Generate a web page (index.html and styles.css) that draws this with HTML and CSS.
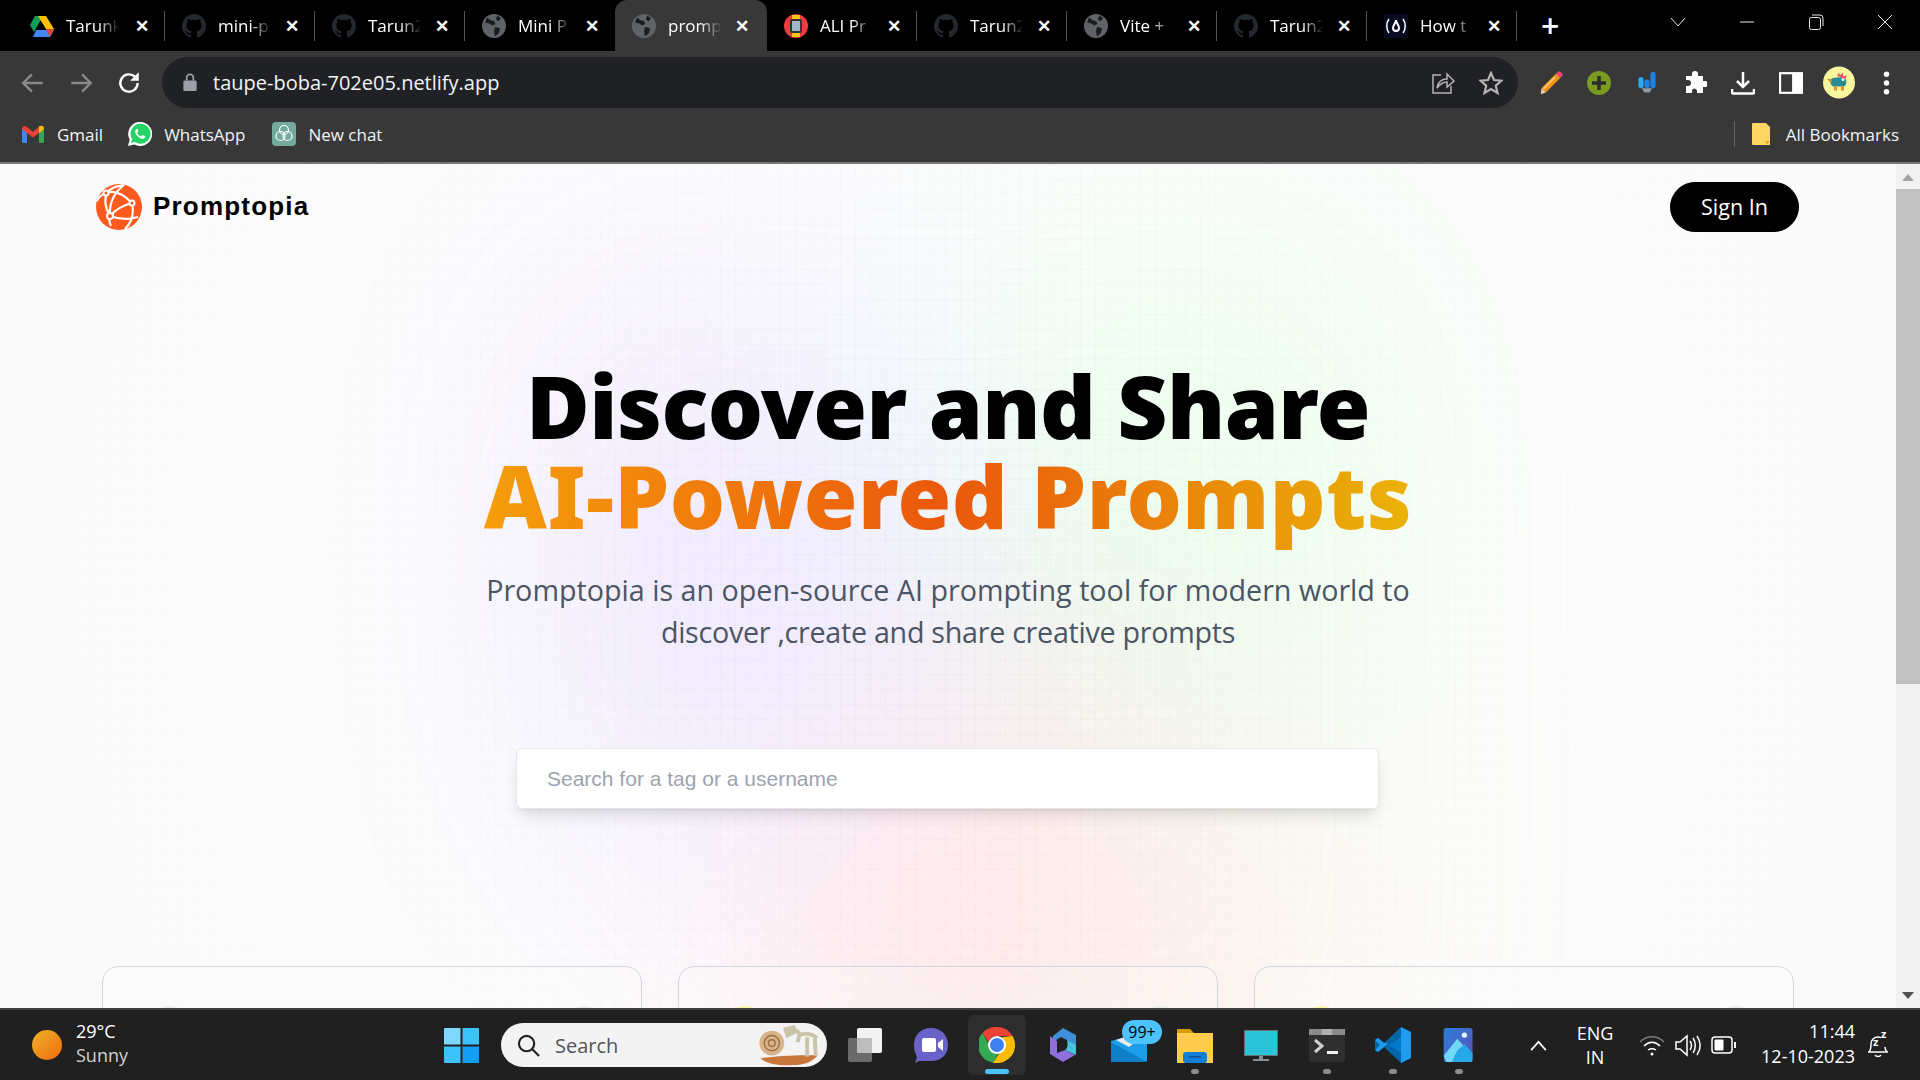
FILE: index.html
```html
<!DOCTYPE html>
<html lang="en">

<head>
    <meta charset="UTF-8">
    <meta name="viewport" content="width=device-width, initial-scale=1.0">
    <title>Promptopia</title>
    <link rel="stylesheet" href="styles.css">
</head>

<body>
    <svg class="sprites" aria-hidden="true">
        <symbol id="github" viewBox="0 0 16 16">
            <path fill="#24292f" d="M8 0C3.58 0 0 3.58 0 8c0 3.54 2.29 6.53 5.47 7.59.4.07.55-.17.55-.38 0-.19-.01-.82-.01-1.49-2.01.37-2.53-.49-2.69-.94-.09-.23-.48-.94-.82-1.13-.28-.15-.68-.52-.01-.53.63-.01 1.08.58 1.23.82.72 1.21 1.87.87 2.33.66.07-.52.28-.87.51-1.07-1.78-.2-3.64-.89-3.64-3.95 0-.87.31-1.59.82-2.15-.08-.2-.36-1.02.08-2.12 0 0 .67-.21 2.2.82.64-.18 1.32-.27 2-.27.68 0 1.36.09 2 .27 1.53-1.04 2.2-.82 2.2-.82.44 1.1.16 1.92.08 2.12.51.56.82 1.27.82 2.15 0 3.07-1.87 3.75-3.65 3.95.29.25.54.73.54 1.48 0 1.07-.01 1.93-.01 2.2 0 .21.15.46.55.38A8.013 8.013 0 0016 8c0-4.42-3.58-8-8-8z" />
        </symbol>
        <symbol id="globe" viewBox="0 0 24 24">
            <circle cx="12" cy="12" r="12" fill="#5f6368" />
            <path fill="#1b1b1c" d="M5 3.500l4 3 3 .5 1.500 3-3.500 1.500-2.500-2L3 8.500zM15 1.500l4 2.500-2 3-3-1zM13 13l5 1-1 5-4 3.500-1-5z" />
        </symbol>
    </svg>

    <div class="tabstrip">
        <div class="tab">
            <svg class="tab-icon" viewBox="0 0 24 22">
                <path fill="#0f9d58" d="M8 1h8L7 17l-4-7z" transform="translate(-3 -0)" />
                <path fill="#ffc107" d="M8 1h8l8 13h-8z" />
                <path fill="#4285f4" d="M6 15h18l-4 7H3z" />
                <path fill="#ea4335" d="M16 14h8l-4 8z" />
            </svg>
            <span class="tab-title">Tarunk</span><span class="tab-close">&#10005;</span>
        </div>
        <div class="tab"><svg class="tab-icon"><use href="#github" /></svg><span class="tab-title">mini-p</span><span class="tab-close">&#10005;</span></div>
        <div class="tab"><svg class="tab-icon"><use href="#github" /></svg><span class="tab-title">Tarun2</span><span class="tab-close">&#10005;</span></div>
        <div class="tab tab-before-active"><svg class="tab-icon"><use href="#globe" /></svg><span class="tab-title">Mini P</span><span class="tab-close">&#10005;</span></div>
        <div class="tab tab-active"><svg class="tab-icon"><use href="#globe" /></svg><span class="tab-title">promp</span><span class="tab-close">&#10005;</span></div>
        <div class="tab">
            <svg class="tab-icon" viewBox="0 0 24 24">
                <circle cx="12" cy="12" r="12" fill="#ef3b3f" />
                <rect x="8" y="1" width="8" height="22" fill="#f5c518" />
                <rect x="6" y="5" width="12" height="14" rx="2" fill="#333" />
                <rect x="8" y="7" width="8" height="10" fill="#9fb8c8" />
            </svg>
            <span class="tab-title">ALI Pr</span><span class="tab-close">&#10005;</span>
        </div>
        <div class="tab"><svg class="tab-icon"><use href="#github" /></svg><span class="tab-title">Tarun2</span><span class="tab-close">&#10005;</span></div>
        <div class="tab"><svg class="tab-icon"><use href="#globe" /></svg><span class="tab-title">Vite +</span><span class="tab-close">&#10005;</span></div>
        <div class="tab"><svg class="tab-icon"><use href="#github" /></svg><span class="tab-title">Tarun2</span><span class="tab-close">&#10005;</span></div>
        <div class="tab">
            <svg class="tab-icon" viewBox="0 0 24 24">
                <rect width="24" height="24" fill="#0a0a23" />
                <path fill="none" stroke="#fff" stroke-width="1.500" d="M5 5c-3 4-3 10 0 14M19 5c3 4 3 10 0 14" />
                <path fill="none" stroke="#fff" stroke-width="2" d="M12 6c0 3 3 5 3 8 0 2-1 3-3 3s-3-1-3-3c0-3 3-5 3-8z" />
            </svg>
            <span class="tab-title">How t</span><span class="tab-close">&#10005;</span>
        </div>
        <div class="new-tab">+</div>
        <div class="window-controls">
            <svg class="win-btn" viewBox="0 0 16 16"><path d="M1 4l7 8 7-8" /></svg>
            <svg class="win-btn" viewBox="0 0 16 16"><path d="M1 8h14" /></svg>
            <svg class="win-btn" viewBox="0 0 16 16"><rect x="1.500" y="3.500" width="11" height="12" rx="2" /><path d="M4 1h8a3 3 0 0 1 3 3v8" /></svg>
            <svg class="win-btn" viewBox="0 0 16 16"><path d="M1 1l14 14M15 1L1 15" /></svg>
        </div>
    </div>

    <div class="toolbar">
        <svg class="nav-btn nav-dim" viewBox="0 0 24 24"><path d="M21 12H4M11 4l-8 8 8 8" /></svg>
        <svg class="nav-btn nav-dim" viewBox="0 0 24 24"><path d="M3 12h17M13 4l8 8-8 8" /></svg>
        <svg class="nav-btn" viewBox="0 0 24 24"><path d="M20 12a8 8 0 1 1-2.500-5.800" /><path class="solid" d="M21 2v8h-8z" /></svg>
        <div class="address-bar">
            <svg class="lock" viewBox="0 0 14 20"><path d="M3.500 8V5a3.500 3.500 0 0 1 7 0v3" fill="none" stroke="#9aa0a6" stroke-width="1.800" /><rect y="8" width="14" height="11" rx="1.500" fill="#9aa0a6" /></svg>
            <span class="url">taupe-boba-702e05.netlify.app</span>
            <svg class="addr-icon addr-share" viewBox="0 0 24 24"><path d="M10 4H2v18h18v-7" /><path d="M6 17c1-6 5-9 10-9V3l7 7-7 6v-5c-4 0-7 2-10 6z" /></svg>
            <svg class="addr-icon" viewBox="0 0 24 24"><path d="M12 2l3 7 7.500.7-5.700 5 1.700 7.300-6.500-3.900L5.500 22l1.700-7.300-5.700-5L9 9z" stroke-width="2.200" /></svg>
        </div>
        <div class="extensions">
            <svg class="ext" viewBox="0 0 28 28">
                <path fill="#f29111" d="M20 3l5 5L8 25l-5-5z" />
                <path fill="#ffc266" d="M18 6l2 2L6 22l-2-2z" />
                <path fill="#f0447a" d="M20 3l2-2a2 2 0 0 1 3 0l2 2a2 2 0 0 1 0 3l-2 2z" />
                <path fill="#e8d0b0" d="M3 20l5 5-6 2z" />
            </svg>
            <svg class="ext" viewBox="0 0 24 24">
                <circle cx="12" cy="12" r="12" fill="#7a9a22" />
                <path fill="none" stroke="#2d2d2d" stroke-width="3.500" d="M12 5v14M5 12h14" />
            </svg>
            <svg class="ext" viewBox="0 0 24 28">
                <rect x="2" y="7" width="6" height="13" rx="3" fill="#2aa8f0" />
                <rect x="9" y="10" width="6" height="10" rx="3" fill="#1d7fe0" />
                <rect x="16" y="1" width="6" height="19" rx="3" fill="#1d7fe0" />
                <path fill="#8e9ba6" d="M6 20h12l-3 5H9z" />
            </svg>
            <svg class="ext" viewBox="0 0 24 24"><path fill="#fff" d="M9 3a3 3 0 0 1 6 0v2h5v5h2a3 3 0 0 1 0 6h-2v6h-6v-2a2.500 2.500 0 0 0-5 0v2H3v-7h2a3 3 0 0 0 0-6H3V5h6z" /></svg>
            <svg class="ext" viewBox="0 0 24 24"><path fill="none" stroke="#fff" stroke-width="2.500" d="M12 1v14M6 10l6 6 6-6M1 18v3a1.500 1.500 0 0 0 1.500 1.500h19A1.500 1.500 0 0 0 23 21v-3" /></svg>
            <svg class="ext" viewBox="0 0 22 20"><rect width="22" height="20" fill="#fff" /><rect x="2" y="2" width="10" height="16" fill="#383838" /></svg>
            <svg class="ext ext-avatar" viewBox="0 0 32 32">
                <circle cx="16" cy="16" r="16" fill="#f7f59e" />
                <path fill="#2a8c93" d="M7 13c5-3 13-3 16 0 1 3 0 6-2 7H10c-2-1-3-4-3-7z" />
                <path fill="#f08a24" d="M4 12l5 1-1 4z" />
                <path fill="#e84c6c" d="M14 9l2-3 1 3 3-3 0 4 4-1-2 4z" />
                <circle cx="20" cy="13" r="1.500" fill="#fff" />
                <rect x="11" y="20" width="3" height="4" fill="#f08a24" />
                <rect x="18" y="20" width="3" height="4" fill="#f08a24" />
            </svg>
            <svg class="ext ext-dots" viewBox="0 0 6 22"><circle cx="3" cy="3" r="2.500" /><circle cx="3" cy="11" r="2.500" /><circle cx="3" cy="19" r="2.500" /></svg>
        </div>
    </div>

    <div class="bookmarks">
        <div class="bookmark">
            <svg class="bm-icon" viewBox="0 0 22 18">
                <path fill="#4285f4" d="M0 3h5v15H1.500A1.500 1.500 0 0 1 0 16.500z" />
                <path fill="#34a853" d="M17 3h5v13.500a1.500 1.500 0 0 1-1.500 1.500H17z" />
                <path fill="#ea4335" d="M0 3a3 3 0 0 1 5-1l6 5 6-5a3 3 0 0 1 5 1v1l-5 4-6 4.500L5 8 0 4z" />
                <path fill="#fbbc04" d="M17 1.500a3 3 0 0 1 5 1.500v1l-5 4z" />
            </svg>
            <span>Gmail</span>
        </div>
        <div class="bookmark">
            <svg class="bm-icon bm-square" viewBox="0 0 24 24">
                <path fill="#fff" d="M0 24l1.700-6.200A12 12 0 1 1 6.300 22.400z" />
                <path fill="#25d366" d="M3 21l1.100-4A10 10 0 1 1 7 20z" />
                <path fill="#fff" d="M9 7c-.5 0-1 .2-1.300.8-.8 1.500-.7 3 .6 5 1.400 2 3.400 3.500 5.500 4 1.500.3 2.800-.4 3.200-1.600.2-.6.2-1 0-1.200l-2.200-1c-.3-.1-.5 0-.7.2l-.8 1c-.2.200-.4.200-.7.100-1.600-.7-2.600-1.700-3.400-3-.1-.3-.1-.5.100-.7l.6-.7c.2-.2.200-.5.100-.7L10 7.400C9.800 7 9.400 7 9 7z" />
            </svg>
            <span>WhatsApp</span>
        </div>
        <div class="bookmark">
            <svg class="bm-icon bm-square" viewBox="0 0 24 24">
                <rect width="24" height="24" rx="4" fill="#74aa9c" />
                <g fill="none" stroke="#fff" stroke-width="1.200">
                    <circle cx="12" cy="8" r="4.500" />
                    <circle cx="8.500" cy="14" r="4.500" />
                    <circle cx="15.500" cy="14" r="4.500" />
                </g>
            </svg>
            <span>New chat</span>
        </div>
        <div class="all-bookmarks">
            <svg class="folder" viewBox="0 0 18 22"><path fill="#fdd663" d="M1 0h13l4 4v18H1a1 1 0 0 1-1-1V1a1 1 0 0 1 1-1z" /><path fill="#e8a900" d="M14 22v-4h4z" /></svg>
            <span>All Bookmarks</span>
        </div>
    </div>

    <div class="viewport">
        <div class="page">
            <div class="page-bg">
                <div class="grid-lines"></div>
                <div class="fade"></div>
                <div class="gradient"></div>
            </div>

            <nav class="site-nav">
                <div class="brand">
                    <svg class="brand-logo" viewBox="0 0 46 46">
                        <circle cx="23" cy="23" r="23" fill="#fe5a1e" />
                        <g fill="none" stroke="#fff" stroke-width="2.200">
                            <path d="M11 9c7-3 15 0 25 10M11 9c-3 7-1 16 3 23M14 32c6-7 14-11 22-13M14 32c8 3 18 4 28 1M36 19c2 9 1 18-7 26M11 9c3-5 10-7 17-8M28 1c-9 7-15 18-14 31M14 32c-1 3-1 6 1 10M11 9C7 10 3 12 1 17" />
                        </g>
                        <g fill="#fe5a1e" stroke="#fff" stroke-width="2">
                            <circle cx="10" cy="9" r="2.500" />
                            <circle cx="36" cy="19" r="2.500" />
                            <circle cx="14" cy="32" r="3" />
                        </g>
                    </svg>
                    <span class="brand-name">Promptopia</span>
                </div>
                <button class="sign-in" type="button">Sign In</button>
            </nav>

            <section class="hero">
                <h1 class="hero-title">Discover and Share<br><span class="orange-text">AI-Powered Prompts</span></h1>
                <p class="hero-desc">Promptopia is an open-source AI prompting tool for modern world to<br><span class="hero-desc-end">discover ,create and share creative prompts</span></p>
                <input class="search-input" type="text" placeholder="Search for a tag or a username">
            </section>

            <div class="cards">
                <div class="card"><span class="avatar avatar-grey"></span><span class="avatar avatar-grey"></span></div>
                <div class="card"><span class="avatar avatar-yellow"></span><span class="avatar avatar-grey"></span></div>
                <div class="card"><span class="avatar avatar-yellow"></span><span class="avatar avatar-grey"></span></div>
            </div>
        </div>
        <div class="scrollbar">
            <div class="scroll-arrow scroll-up"></div>
            <div class="scroll-thumb"></div>
            <div class="scroll-arrow scroll-down"></div>
        </div>
    </div>

    <div class="taskbar">
        <div class="weather">
            <span class="sun"></span>
            <div class="weather-text"><span>29°C</span><span class="weather-dim">Sunny</span></div>
        </div>
        <svg class="start" viewBox="0 0 35 35">
            <path fill="#7fd8ff" d="M1 0h15.500v16.500H0V1a1 1 0 0 1 1-1z" />
            <path fill="#3cc1fb" d="M18.500 0H34a1 1 0 0 1 1 1v15.500H18.500z" />
            <path fill="#3cc1fb" d="M0 18.500h16.500V35H1a1 1 0 0 1-1-1z" />
            <path fill="#149df5" d="M18.500 18.500H35V34a1 1 0 0 1-1 1H18.500z" />
        </svg>
        <div class="task-search">
            <svg class="task-search-icon" viewBox="0 0 24 24"><circle cx="10" cy="10" r="8" /><path d="M16 16l7 7" /></svg>
            <span>Search</span>
            <svg class="doodle" viewBox="0 0 66 44">
                <path fill="#c8763a" d="M3 36c14-3 48-4 60-3-6 7-14 10-26 10-12 1-28-1-34-7z" />
                <circle cx="15" cy="20" r="13" fill="#d9b389" />
                <circle cx="15" cy="20" r="8" fill="none" stroke="#9b6f45" stroke-width="1.500" />
                <circle cx="15" cy="20" r="3.500" fill="none" stroke="#9b6f45" stroke-width="1.500" />
                <path fill="none" stroke="#c9c3a8" stroke-width="4" d="M28 8c8-5 14-2 16 3 6-1 14-1 18 4M44 11l-2 8M52 14v20M60 15l1 18" />
                <path fill="#c9c3a8" d="M27 4l12-3 3 8-12 6z" />
            </svg>
        </div>
        <div class="task-apps">
            <div class="app">
                <svg viewBox="0 0 36 36">
                    <rect x="1" y="11" width="24" height="24" rx="2" fill="#6a6a6a" />
                    <rect x="10" y="1" width="25" height="25" rx="2" fill="#f2f2f2" />
                    <rect x="10" y="11" width="15" height="15" fill="#bdbdbd" />
                </svg>
            </div>
            <div class="app">
                <svg viewBox="0 0 36 36">
                    <path fill="#6b62c9" d="M18 1c10 0 17 7 17 17s-7 16-17 16H6l-4 2 2-6C2 26 1 22 1 18 1 8 8 1 18 1z" />
                    <rect x="9" y="11" width="14" height="14" rx="2" fill="#fff" />
                    <path fill="#fff" d="M25 16l5-4v12l-5-4z" />
                </svg>
            </div>
            <div class="app app-active">
                <svg viewBox="0 0 36 36">
                    <path fill="#ea4335" d="M18 0a18 18 0 0 1 15.600 9H18a9 9 0 0 0-8.500 6L3.500 6A18 18 0 0 1 18 0z" />
                    <path fill="#34a853" d="M3.500 6l9 16a9 9 0 0 0 6.500 5l-5 8.700A18 18 0 0 1 3.500 6z" />
                    <path fill="#fbbc04" d="M33.600 9A18 18 0 0 1 14 35.700l9-13.700A9 9 0 0 0 23 10z" />
                    <circle cx="18" cy="18" r="9" fill="#fff" />
                    <circle cx="18" cy="18" r="7" fill="#3b7ff0" />
                </svg>
            </div>
            <div class="app">
                <svg viewBox="0 0 36 36">
                    <path fill="#3f8fd8" d="M18 1l13 7v11l-9-6-6-3-8 5V9z" />
                    <path fill="#8f6fdc" d="M5 9v18l13 8 12-7-10-5-8 3V14z" />
                    <path fill="#47c4d8" d="M22 13l9 5v10l-11-5c3-2 3-6 2-10z" />
                    <circle cx="18" cy="18" r="4" fill="#202020" />
                </svg>
            </div>
            <div class="app app-mail">
                <svg viewBox="0 0 36 36">
                    <path fill="#1d9ee8" d="M0 14l36-10v30H0z" />
                    <path fill="#eaeaea" d="M5 13l20-7 4 5-11 9z" />
                    <path fill="#0d7fc9" d="M0 15l36 20H0z" />
                </svg>
                <span class="mail-badge">99+</span>
            </div>
            <div class="app app-open">
                <svg viewBox="0 0 36 36">
                    <path fill="#d69c00" d="M0 2h13l4 4h5v6H0z" />
                    <path fill="#ffcc4d" d="M0 6h36v30H0z" />
                    <rect x="6" y="25" width="24" height="11" rx="3" fill="#0f7fd8" />
                    <rect x="12" y="29" width="12" height="1.500" fill="#0a4f90" />
                </svg>
            </div>
            <div class="app">
                <svg viewBox="0 0 36 36">
                    <rect x="1" y="3" width="34" height="26" fill="#6a6f73" />
                    <rect x="2" y="4" width="32" height="24" fill="#2bc4d8" />
                    <rect x="16" y="29" width="4" height="3" fill="#8a8f93" />
                    <rect x="10" y="32" width="16" height="2" fill="#8a8f93" />
                </svg>
            </div>
            <div class="app app-open">
                <svg viewBox="0 0 36 36">
                    <rect y="2" width="36" height="33" rx="2" fill="#2f2f2f" />
                    <rect y="2" width="36" height="6" fill="#8c8c8c" />
                    <rect x="13" y="2" width="10" height="6" fill="#b0b0b0" />
                    <path fill="none" stroke="#cfcfcf" stroke-width="3" d="M6 13l7 6-7 6" />
                    <rect x="18" y="24" width="11" height="3" fill="#f2f2f2" />
                </svg>
            </div>
            <div class="app app-open">
                <svg viewBox="0 0 36 36">
                    <path fill="#0065a9" d="M26 0l10 5v26l-10 5-17-16-6 5-3-2V13l3-2 6 5z" />
                    <path fill="#1f9cf0" d="M26 0l10 5v26l-10 5zM9 16l-6-5-3 2 5 5-5 5 3 2 6-5 4-4z" />
                    <path fill="#007acc" d="M26 10L14 18l12 8z" />
                </svg>
            </div>
            <div class="app app-open">
                <svg viewBox="0 0 36 40">
                    <defs>
                        <linearGradient id="photosBg" x1="0" y1="0" x2="1" y2="1">
                            <stop offset="0" stop-color="#2b7fd8" />
                            <stop offset="1" stop-color="#5d4fb8" />
                        </linearGradient>
                    </defs>
                    <rect x="1" y="1" width="32" height="38" rx="3" fill="url(#photosBg)" />
                    <circle cx="24" cy="9" r="3" fill="#dff3ff" />
                    <path fill="#6fd8f7" d="M1 32l15-19 12 13-12 13H4z" />
                    <path fill="#28a8e8" d="M16 26l8-7 9 10v7a3 3 0 0 1-3 3H10z" />
                </svg>
            </div>
        </div>
        <div class="tray">
            <svg class="tray-chevron" viewBox="0 0 18 12"><path d="M1 11l8-9 8 9" /></svg>
            <div class="lang"><span>ENG</span><span>IN</span></div>
            <svg class="tray-icon" viewBox="0 0 26 24"><path stroke="#777" d="M1 9c7-7 17-7 24 0" /><path d="M5 13c5-5 11-5 16 0M9 17c3-2 5-2 8 0" /><circle cx="13" cy="21" r="1.500" class="solid" /></svg>
            <svg class="tray-icon" viewBox="0 0 26 24"><path d="M1 9v7h4l7 6V3L5 9zM15 8c2 3 2 6 0 9M18 5c3 4 3 11 0 15M22 3c4 6 4 13 0 19" /></svg>
            <svg class="tray-icon" viewBox="0 0 26 24"><rect x="1" y="4" width="20" height="16" rx="3" /><rect class="solid" x="3.500" y="6.500" width="9" height="11" rx="1" /><path class="solid" d="M23 9h2v6h-2z" /></svg>
            <div class="clock"><span>11:44</span><span>12-10-2023</span></div>
            <div class="bell">
                <svg viewBox="0 0 24 30"><path d="M3 22c2-2 2-5 2-8 0-4 3-7 7-7M12 7c1 0 2 .2 3 .7M21 22c-1-1-2-3-2-5M2 22h20M9 25c1 2 5 2 6 0" /></svg>
                <span class="bell-z">z</span><span class="bell-z bell-z2">z</span>
            </div>
        </div>
    </div>
</body>

</html>
```

FILE: styles.css
```css
* {
    box-sizing: border-box;
}

html,
body {
    margin: 0;
    height: 100%;
    overflow: hidden;
}

body {
    display: flex;
    flex-direction: column;
    width: 1920px;
    height: 1080px;
    font-family: "Open Sans", "Noto Sans", sans-serif;
    background: #fff;
}

.sprites {
    display: none;
}

/* tab strip */
.tabstrip {
    display: flex;
    align-items: center;
    height: 51px;
    padding-left: 15px;
    background: #000;
    color: #fff;
    flex-shrink: 0;
}

.tab {
    position: relative;
    display: flex;
    align-items: center;
    width: 150px;
    height: 30px;
    padding-left: 17px;
    border-right: 1px solid #555;
    font-size: 17px;
}

.tab:first-child {
    padding-left: 15px;
}

.tab-before-active {
    border-right: none;
}

.tab-active {
    height: 51px;
    width: 152px;
    background: #383838;
    border-right: none;
    border-radius: 12px 12px 0 0;
    align-self: flex-end;
}

.tab-icon {
    width: 24px;
    height: 24px;
    flex-shrink: 0;
}

.tab-title {
    margin-left: 12px;
    width: 58px;
    white-space: nowrap;
    overflow: hidden;
    mask-image: linear-gradient(to right, #000 55%, transparent 92%);
}

.tab-close {
    position: absolute;
    left: 120px;
    font-size: 17px;
    font-weight: 700;
}

.new-tab {
    margin-left: 24px;
    font-size: 32px;
    font-weight: 600;
    line-height: 1;
}

.window-controls {
    display: flex;
    gap: 53px;
    margin-left: auto;
    margin-right: 27px;
    margin-top: -8px;
}

.win-btn {
    width: 16px;
    height: 16px;
    fill: none;
    stroke: #e8e8e8;
    stroke-width: 1;
}

/* address bar row */
.toolbar {
    display: flex;
    align-items: center;
    height: 63px;
    padding: 6px 0 6px 20px;
    background: #383838;
    flex-shrink: 0;
}

.nav-btn {
    width: 26px;
    height: 26px;
    margin-right: 22px;
    fill: none;
    stroke: #fff;
    stroke-width: 2.200;
}

.nav-btn .solid {
    fill: #fff;
    stroke: none;
}

.nav-dim {
    stroke: #8a8a8a;
}

.address-bar {
    display: flex;
    align-items: center;
    width: 1356px;
    height: 51px;
    margin-left: -2px;
    padding: 0 15px 0 21px;
    background: #202124;
    border-radius: 26px;
}

.lock {
    width: 14px;
    height: 19px;
}

.url {
    margin-left: 16px;
    color: #f1f3f4;
    font-size: 20px;
}

.addr-icon {
    width: 24px;
    height: 24px;
    margin-left: 24px;
    fill: none;
    stroke: #b4b4b4;
    stroke-width: 1.500;
}

.addr-share {
    margin-left: auto;
}

.extensions {
    display: flex;
    align-items: center;
    margin-left: 9px;
}

.ext {
    width: 24px;
    height: 24px;
    margin: 0 12px;
}

.ext-avatar {
    width: 32px;
    height: 33px;
    margin: 0 8px;
}

.ext-dots {
    width: 7px;
    margin: 0 20px;
    fill: #fff;
}

/* bookmarks row */
.bookmarks {
    display: flex;
    align-items: center;
    height: 50px;
    padding: 0 22px 8px;
    background: #383838;
    border-bottom: 2px solid #777;
    color: #f1f3f4;
    font-size: 17px;
    flex-shrink: 0;
}

.bookmark {
    display: flex;
    align-items: center;
    gap: 12px;
    margin-right: 27px;
}

.bookmark:first-child {
    gap: 13px;
    margin-right: 25px;
}

.bm-icon {
    width: 22px;
    height: 18px;
}

.bm-square {
    width: 24px;
    height: 24px;
}

.all-bookmarks {
    display: flex;
    align-items: center;
    gap: 16px;
    height: 26px;
    margin-left: auto;
    padding-left: 17px;
    border-left: 1px solid #666;
    margin-right: -1px;
}

.folder {
    width: 18px;
    height: 22px;
}

/* page */
.viewport {
    display: flex;
    flex: 1;
    min-height: 0;
}

.page {
    position: relative;
    flex: 1;
    overflow: hidden;
    background: #fff;
}

.page-bg {
    position: absolute;
    inset: 0;
    display: flex;
    justify-content: center;
    height: 844px;
}

.grid-lines {
    position: absolute;
    inset: 0;
    background-image: linear-gradient(to right, rgba(0, 0, 0, .025) 1px, transparent 1px), linear-gradient(to bottom, rgba(0, 0, 0, .025) 1px, transparent 1px);
    background-size: 15px 15px;
}

.fade {
    position: absolute;
    inset: 0;
    background: radial-gradient(circle, rgba(2, 0, 36, 0) 0, #fafafa 100%);
}

.gradient {
    position: absolute;
    top: 100px;
    width: 100%;
    max-width: 800px;
    height: 100%;
    opacity: .15;
    filter: blur(125px) saturate(150%);
    background-image:
        radial-gradient(at 27% 37%, hsla(215, 98%, 61%, 1) 0px, transparent 0%),
        radial-gradient(at 97% 21%, hsla(125, 98%, 72%, 1) 0px, transparent 50%),
        radial-gradient(at 52% 99%, hsla(354, 98%, 61%, 1) 0px, transparent 50%),
        radial-gradient(at 10% 29%, hsla(256, 96%, 67%, 1) 0px, transparent 50%),
        radial-gradient(at 97% 96%, hsla(38, 60%, 74%, 1) 0px, transparent 50%),
        radial-gradient(at 33% 50%, hsla(222, 67%, 73%, 1) 0px, transparent 50%),
        radial-gradient(at 79% 53%, hsla(343, 68%, 79%, 1) 0px, transparent 50%);
}

.site-nav {
    position: relative;
    display: flex;
    align-items: center;
    justify-content: space-between;
    padding: 18px 97px 0 96px;
}

.brand {
    display: flex;
    align-items: center;
    gap: 11px;
}

.brand-logo {
    width: 46px;
    height: 46px;
}

.brand-name {
    padding-bottom: 2px;
    font-family: "Liberation Sans", Arial, sans-serif;
    font-size: 26px;
    font-weight: 700;
    letter-spacing: 1.2px;
    color: #000;
}

.sign-in {
    width: 129px;
    height: 50px;
    padding-bottom: 3px;
    border: 1px solid #000;
    border-radius: 25px;
    background: #000;
    color: #fff;
    font-family: "Open Sans", sans-serif;
    font-size: 21.500px;
}

.hero {
    position: relative;
    display: flex;
    flex-direction: column;
    align-items: center;
    text-align: center;
}

.hero-title {
    margin: 128px 0 0;
    font-family: "Noto Sans", "Open Sans", sans-serif;
    font-size: 87px;
    font-weight: 900;
    letter-spacing: -.6px;
    line-height: 90px;
    color: #000;
}

.orange-text {
    background: linear-gradient(to right, #f59e0b, #ea580c, #eab308);
    -webkit-background-clip: text;
    background-clip: text;
    color: transparent;
    letter-spacing: .5px;
}

.hero-desc {
    margin: 29px 0 0;
    font-size: 28.700px;
    line-height: 42px;
    color: #4b5563;
}

.hero-desc-end {
    letter-spacing: -.28px;
}

.search-input {
    width: 863px;
    height: 61px;
    margin-top: 95px;
    margin-left: -1px;
    padding: 0 30px;
    border: 1px solid #e5e7eb;
    border-radius: 6px;
    background: #fff;
    box-shadow: 0 10px 15px -3px rgba(0, 0, 0, .1), 0 4px 6px -4px rgba(0, 0, 0, .1);
    font-family: "Liberation Sans", Arial, sans-serif;
    font-size: 21px;
}

.search-input::placeholder {
    color: #9ca3af;
}

.cards {
    position: relative;
    display: grid;
    grid-template-columns: repeat(3, 540px);
    gap: 36px;
    justify-content: center;
    margin-top: 157px;
}

.card {
    display: flex;
    justify-content: space-between;
    height: 300px;
    padding: 39px 34px 0 43px;
    border: 1px solid #d1d5db;
    border-radius: 16px;
    background: rgba(255, 255, 255, .2);
}

.avatar {
    width: 46px;
    height: 46px;
    border-radius: 50%;
}

.avatar-grey {
    background: #ececec;
}

.avatar-yellow {
    background: #f7f59e;
}

/* scrollbar */
.scrollbar {
    display: flex;
    flex-direction: column;
    align-items: center;
    width: 24px;
    background: #f1f1f1;
}

.scroll-arrow {
    width: 0;
    height: 0;
    border-left: 6px solid transparent;
    border-right: 6px solid transparent;
}

.scroll-up {
    margin-top: 10px;
    border-bottom: 7px solid #a3a3a3;
}

.scroll-thumb {
    width: 100%;
    height: 495px;
    margin-top: 8px;
    background: #c1c1c1;
}

.scroll-down {
    margin-top: auto;
    margin-bottom: 9px;
    border-top: 7px solid #505050;
}

/* windows taskbar */
.taskbar {
    display: flex;
    align-items: center;
    height: 72px;
    background: #202020;
    border-top: 2px solid #3f3f3f;
    color: #fff;
    flex-shrink: 0;
}

.weather {
    display: flex;
    align-items: center;
    width: 444px;
    padding-left: 32px;
    gap: 14px;
}

.sun {
    width: 30px;
    height: 30px;
    border-radius: 50%;
    background: linear-gradient(135deg, #eeb32b, #f06a0c);
}

.weather-text {
    display: flex;
    flex-direction: column;
    padding-bottom: 4px;
    font-size: 18px;
    line-height: 24px;
}

.weather-dim {
    color: #d0d0d0;
}

.start {
    width: 35px;
    height: 35px;
}

.task-search {
    display: flex;
    align-items: center;
    width: 326px;
    height: 44px;
    margin-left: 22px;
    padding-left: 16px;
    border-radius: 22px;
    background: #f3f3f3;
    color: #555;
    font-size: 20px;
    overflow: hidden;
}

.task-search-icon {
    width: 23px;
    height: 23px;
    margin-right: 15px;
    fill: none;
    stroke: #202020;
    stroke-width: 2.200;
}

.doodle {
    width: 70px;
    height: 42px;
    margin-left: auto;
    margin-right: 3px;
}

.task-apps {
    display: flex;
    margin-left: 5px;
}

.app {
    position: relative;
    display: flex;
    align-items: center;
    justify-content: center;
    width: 66px;
    height: 60px;
}

.app svg {
    width: 36px;
    height: 36px;
}

.app-active::before {
    content: "";
    position: absolute;
    inset: 0 4px;
    background: #2d2d2d;
    border-radius: 5px;
}

.app-active svg {
    position: relative;
}

.app-active::after {
    content: "";
    position: absolute;
    bottom: 1px;
    left: 21px;
    width: 24px;
    height: 5px;
    border-radius: 3px;
    background: #4cc2ff;
}

.app-open::after {
    content: "";
    position: absolute;
    bottom: 1px;
    left: 29px;
    width: 8px;
    height: 5px;
    border-radius: 3px;
    background: #8c8c8c;
}

.mail-badge {
    position: absolute;
    top: 5px;
    left: 26px;
    width: 40px;
    height: 24px;
    border-radius: 12px;
    background: #4cc2ff;
    color: #000;
    font-size: 16px;
    line-height: 24px;
    text-align: center;
}

.tray {
    display: flex;
    align-items: center;
    flex: 1;
    padding-left: 38px;
}

.tray-chevron {
    width: 17px;
    height: 11px;
    fill: none;
    stroke: #fff;
    stroke-width: 1.800;
}

.lang {
    display: flex;
    flex-direction: column;
    align-items: center;
    width: 50px;
    margin-left: 23px;
    margin-right: 19px;
    font-size: 18px;
    line-height: 24px;
}

.tray-icon {
    width: 26px;
    height: 24px;
    margin-right: 10px;
    fill: none;
    stroke: #fff;
    stroke-width: 1.500;
}

.tray-icon .solid {
    fill: #fff;
    stroke: none;
}

.clock {
    display: flex;
    flex-direction: column;
    align-items: flex-end;
    width: 108px;
    padding-bottom: 2px;
    font-size: 18px;
    line-height: 25px;
}

.bell {
    position: relative;
    width: 24px;
    height: 30px;
    margin-left: 11px;
}

.bell svg {
    width: 24px;
    height: 30px;
    fill: none;
    stroke: #fff;
    stroke-width: 1.500;
}

.bell-z {
    position: absolute;
    top: 6px;
    left: 7px;
    font-size: 11px;
    font-weight: 700;
    line-height: 1;
}

.bell-z2 {
    top: -2px;
    left: 15px;
}
```
